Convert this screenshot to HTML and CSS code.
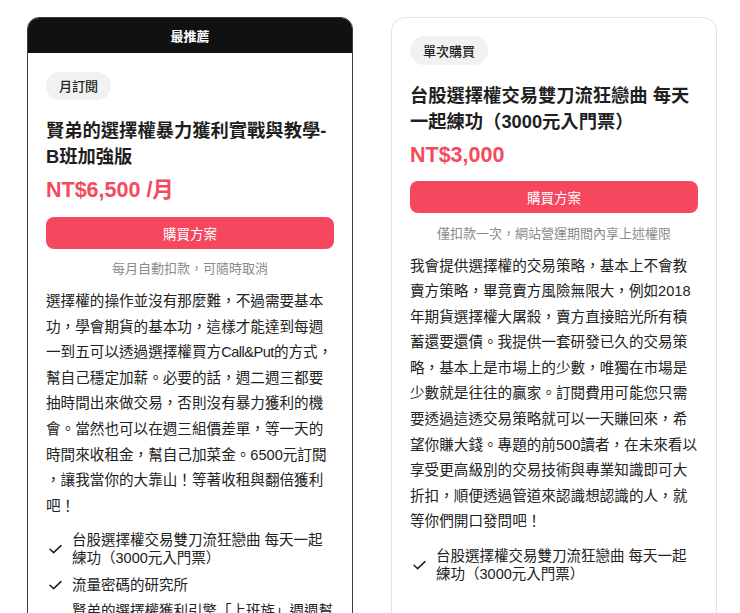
FILE: index.html
```html
<!DOCTYPE html>
<html lang="zh-Hant">
<head>
<meta charset="utf-8">
<title>方案</title>
<link rel="stylesheet" href="styles.css">
</head>
<body>
<div class="plans">
  <section class="card card-featured">
    <div class="card-banner">最推薦</div>
    <div class="card-body">
      <span class="tag">月訂閱</span>
      <h2 class="title">賢弟的選擇權暴力獲利實戰與教學-B班加強版</h2>
      <div class="price">NT$6,500 /月</div>
      <button class="buy">購買方案</button>
      <p class="note">每月自動扣款，可隨時取消</p>
      <p class="desc">選擇權的操作並沒有那麼難，不過需要基本功，學會期貨的基本功，這樣才能達到每週一到五可以透過選擇權買方<span class="latin">Call&amp;Put</span>的方式，幫自己穩定加薪。必要的話，週二週三都要抽時間出來做交易，否則沒有暴力獲利的機會。當然也可以在週三組價差單，等一天的時間來收租金，幫自己加菜金。6500元訂閱，讓我當你的大靠山！等著收租與翻倍獲利吧！</p>
      <ul class="features">
        <li><svg class="check" viewBox="0 0 18 18"><path d="M4 9.2 L7.6 12.6 L15 5.6"/></svg><span>台股選擇權交易雙刀流狂戀曲 每天一起練功（3000元入門票）</span></li>
        <li><svg class="check" viewBox="0 0 18 18"><path d="M4 9.2 L7.6 12.6 L15 5.6"/></svg><span>流量密碼的研究所</span></li>
        <li><svg class="check" viewBox="0 0 18 18"><path d="M4 9.2 L7.6 12.6 L15 5.6"/></svg><span>賢弟的選擇權獲利引擎「上班族」週週幫你加薪</span></li>
      </ul>
    </div>
  </section>
  <section class="card">
    <div class="card-body">
      <span class="tag">單次購買</span>
      <h2 class="title">台股選擇權交易雙刀流狂戀曲 每天一起練功（3000元入門票）</h2>
      <div class="price">NT$3,000</div>
      <button class="buy">購買方案</button>
      <p class="note">僅扣款一次，網站營運期間內享上述權限</p>
      <p class="desc">我會提供選擇權的交易策略，基本上不會教賣方策略，畢竟賣方風險無限大，例如2018年期貨選擇權大屠殺，賣方直接賠光所有積蓄還要還債。我提供一套研發已久的交易策略，基本上是市場上的少數，唯獨在市場是少數就是往往的贏家。訂閱費用可能您只需要透過這透交易策略就可以一天賺回來，希望你賺大錢。專題的前500讀者，在未來看以享受更高級別的交易技術與專業知識即可大折扣，順便透過管道來認識想認識的人，就等你們開口發問吧！</p>
      <ul class="features">
        <li><svg class="check" viewBox="0 0 18 18"><path d="M4 9.2 L7.6 12.6 L15 5.6"/></svg><span>台股選擇權交易雙刀流狂戀曲 每天一起練功（3000元入門票）</span></li>
      </ul>
    </div>
  </section>
</div>
</body>
</html>
```

FILE: styles.css
```css
html, body {
  margin: 0;
  padding: 0;
  background: #ffffff;
  overflow: hidden;
}

body {
  font-family: "Liberation Sans", "Noto Sans CJK TC", sans-serif;
  color: #222222;
}

.plans {
  display: flex;
  align-items: flex-start;
  gap: 38px;
  padding: 17px 0 0 27px;
}

.card {
  width: 326px;
  box-sizing: border-box;
  border: 1px solid #e3e3e3;
  border-radius: 14px;
  background: #ffffff;
  overflow: hidden;
  min-height: 700px;
}

.card-featured {
  border-color: #3a3a3a;
  border-radius: 12px;
}

.card-banner {
  height: 35px;
  background: #111111;
  color: #ffffff;
  font-size: 13px;
  font-weight: 700;
  display: flex;
  align-items: center;
  justify-content: center;
}

.card-body {
  padding: 18px 18px 20px 18px;
  display: flex;
  flex-direction: column;
  align-items: stretch;
}

.card-featured .card-body {
  padding-top: 18.5px;
}

.tag {
  align-self: flex-start;
  height: 28.5px;
  padding: 0 13px;
  border-radius: 15px;
  background: #f1f1f1;
  color: #222222;
  font-size: 13px;
  font-weight: 500;
  display: flex;
  align-items: center;
}

.title {
  margin: 18px 0 0 0;
  font-size: 18.3px;
  line-height: 26px;
  font-weight: 700;
  color: #1f1f1f;
}

.price {
  margin-top: 5px;
  font-size: 21.5px;
  line-height: 30px;
  font-weight: 700;
  color: #f34a5d;
}

.buy {
  margin-top: 11.5px;
  height: 32px;
  border: none;
  border-radius: 8px;
  background: #f5475e;
  color: #ffffff;
  font-family: inherit;
  font-size: 13.5px;
  font-weight: 400;
  padding: 0;
}

.note {
  margin: 11.5px 0 0 0;
  font-size: 13px;
  line-height: 18px;
  color: #8a8a8a;
  text-align: center;
}

.desc {
  margin: 11px 0 0 0;
  font-size: 14.6px;
  line-height: 25.6px;
  color: #222222;
  line-break: anywhere;
}

.latin {
  letter-spacing: -0.5px;
}

.features {
  list-style: none;
  margin: 12px 0 0 0;
  padding: 0;
  display: flex;
  flex-direction: column;
  gap: 8.5px;
}

.features li {
  display: flex;
  align-items: center;
  gap: 8px;
  font-size: 14.5px;
  line-height: 18px;
  color: #222222;
}

.check {
  flex: none;
  width: 18px;
  height: 18px;
}

.check path {
  fill: none;
  stroke: #222222;
  stroke-width: 1.5;
  stroke-linecap: round;
  stroke-linejoin: round;
}
```
